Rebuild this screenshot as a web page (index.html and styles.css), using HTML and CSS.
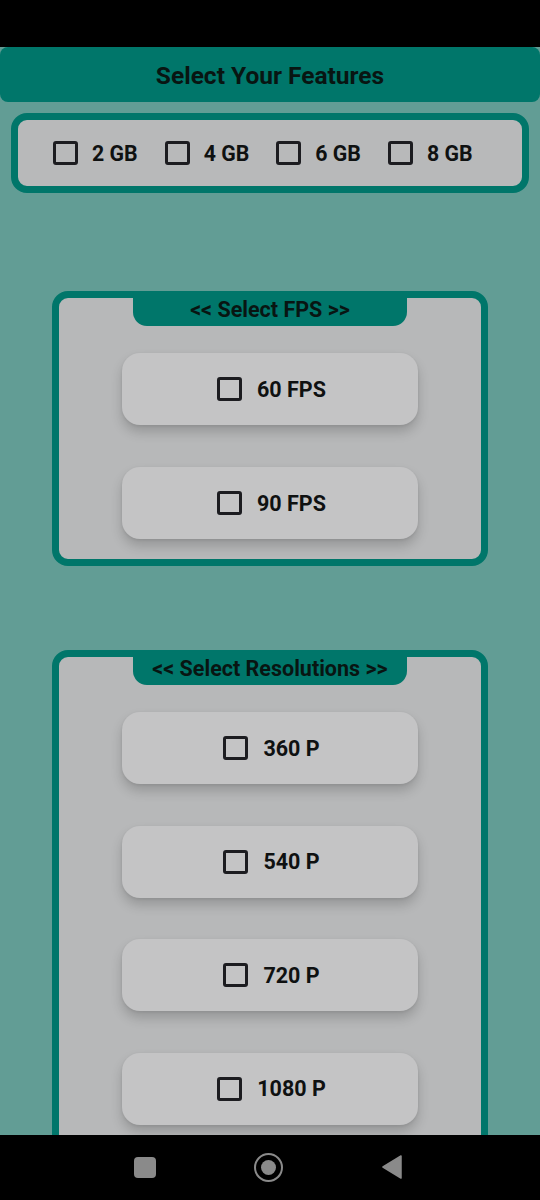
FILE: index.html
```html
<!DOCTYPE html>
<html>
<head>
<meta charset="utf-8">
<link rel="stylesheet" href="styles.css">
</head>
<body>
<div class="status-bar"></div>
<header class="title-bar">Select Your Features</header>

<section class="ram-box">
  <label class="ram-item"><span class="cb"></span><span>2 GB</span></label>
  <label class="ram-item"><span class="cb"></span><span>4 GB</span></label>
  <label class="ram-item"><span class="cb"></span><span>6 GB</span></label>
  <label class="ram-item"><span class="cb"></span><span>8 GB</span></label>
</section>

<section class="panel panel-fps">
  <div class="tab">&lt;&lt; Select FPS &gt;&gt;</div>
  <div class="options">
    <label class="opt"><span class="cb"></span><span>60 FPS</span></label>
    <label class="opt"><span class="cb"></span><span>90 FPS</span></label>
  </div>
</section>

<section class="panel panel-res">
  <div class="tab">&lt;&lt; Select Resolutions &gt;&gt;</div>
  <div class="options">
    <label class="opt"><span class="cb"></span><span>360 P</span></label>
    <label class="opt"><span class="cb"></span><span>540 P</span></label>
    <label class="opt"><span class="cb"></span><span>720 P</span></label>
    <label class="opt"><span class="cb"></span><span>1080 P</span></label>
  </div>
</section>

<nav class="nav-bar">
  <span class="nav-square"></span>
  <span class="nav-home"><span class="nav-home-dot"></span></span>
  <svg class="nav-back" width="20" height="24" viewBox="0 0 20 24"><path d="M19 1 L1 12 L19 23 Z" fill="#8a8a8a" stroke="#8a8a8a" stroke-width="1.5" stroke-linejoin="round"/></svg>
</nav>
</body>
</html>
```

FILE: styles.css
```css
* { box-sizing: border-box; }
html, body {
  margin: 0;
  padding: 0;
}
body {
  width: 540px;
  min-height: 1200px;
  background: #629d95;
  font-family: Roboto, "Liberation Sans", sans-serif;
  font-weight: 700;
  color: #0f1111;
  overflow: hidden;
}
.status-bar {
  height: 47px;
  background: #000;
}
.title-bar {
  height: 55px;
  background: #00766a;
  border-radius: 8px;
  display: flex;
  align-items: center;
  justify-content: center;
  font-size: 24.5px;
  color: #081512;
  padding-top: 2px;
}
.cb {
  width: 25px;
  height: 24px;
  border: 3px solid #1c1c20;
  border-radius: 3px;
  flex: none;
}
.ram-box {
  margin: 11px 11px 0;
  height: 80px;
  border: 7px solid #00766a;
  border-radius: 16px;
  background: #b8b9ba;
  display: flex;
  align-items: center;
  gap: 27px;
  padding-left: 35px;
}
.ram-item {
  display: flex;
  align-items: center;
  gap: 14px;
  font-size: 21.3px;
}
.panel {
  margin: 0 52px;
  border: 7px solid #00766a;
  border-radius: 16px;
  background: #b7b8b9;
  display: flex;
  flex-direction: column;
  align-items: center;
}
.panel-fps {
  margin-top: 98px;
  padding-bottom: 20px;
}
.panel-res {
  margin-top: 84px;
  padding-bottom: 40px;
}
.tab {
  width: 274px;
  height: 28px;
  background: #00766a;
  border-radius: 0 0 14px 14px;
  display: flex;
  align-items: center;
  justify-content: center;
  font-size: 21.5px;
  color: #081512;
  padding-bottom: 5px;
}
.options {
  margin-top: 27px;
  display: flex;
  flex-direction: column;
  gap: 42px;
}
.panel-res .options {
  gap: 41.5px;
}
.opt {
  width: 296px;
  height: 72px;
  background: #c4c4c5;
  border-radius: 18px;
  box-shadow: 0 7px 12px rgba(0, 0, 0, 0.18), 0 1px 3px rgba(0, 0, 0, 0.08);
  display: flex;
  align-items: center;
  justify-content: center;
  gap: 15px;
  font-size: 21.5px;
  padding-left: 3px;
}
.nav-bar {
  position: fixed;
  left: 0;
  right: 0;
  top: 1135px;
  height: 65px;
  background: #000;
}
.nav-square {
  position: absolute;
  left: 134px;
  top: 22px;
  width: 22px;
  height: 21px;
  border-radius: 4px;
  background: #8a8a8a;
}
.nav-home {
  position: absolute;
  left: 254px;
  top: 18px;
  width: 29px;
  height: 29px;
  border: 2.5px solid #8a8a8a;
  border-radius: 50%;
  display: flex;
  align-items: center;
  justify-content: center;
}
.nav-home-dot {
  width: 15px;
  height: 15px;
  border-radius: 50%;
  background: #8a8a8a;
}
.nav-back {
  position: absolute;
  left: 382px;
  top: 20px;
}
```
